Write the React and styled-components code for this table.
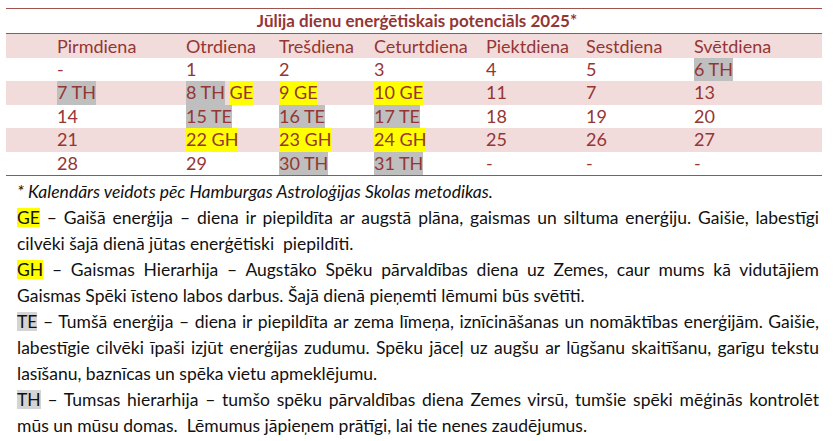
import React from "react";
import styled, { createGlobalStyle } from "styled-components";

const GlobalStyle = createGlobalStyle`
  html, body {
    margin: 0;
    padding: 0;
    background: #ffffff;
  }
  body {
    font-family: Lato, "Open Sans", "Noto Sans", sans-serif;
  }
`;

const days = ["Pirmdiena", "Otrdiena", "Trešdiena", "Ceturtdiena", "Piektdiena", "Sestdiena", "Svētdiena"];

// each cell: plain string, or a list of [text, kind] marks
const weeks = [
  { pink: false, cells: ["-", "1", "2", "3", "4", "5", [["6 TH", "th"]]] },
  { pink: true, cells: [[["7 TH", "th"]], [["8 TH", "th"], ["GE", "ge"]], [["9 GE", "ge"]], [["10 GE", "ge"]], "11", "7", "13"] },
  { pink: false, cells: ["14", [["15 TE", "th"]], [["16 TE", "th"]], [["17 TE", "th"]], "18", "19", "20"] },
  { pink: true, cells: ["21", [["22 GH", "ge"]], [["23 GH", "ge"]], [["24 GH", "ge"]], "25", "26", "27"] },
  { pink: false, cells: ["28", "29", [["30 TH", "th"]], [["31 TH", "th"]], "-", "-", "-"] },
];

const legend = [
  {
    tag: "GE",
    kind: "ge",
    lines: [
      " – Gaišā enerģija – diena ir piepildīta ar augstā plāna, gaismas un siltuma enerģiju. Gaišie, labestīgi",
      "cilvēki šajā dienā jūtas enerģētiski  piepildīti.",
    ],
  },
  {
    tag: "GH",
    kind: "ge",
    lines: [
      " – Gaismas Hierarhija – Augstāko Spēku pārvaldības diena uz Zemes, caur mums kā vidutājiem",
      "Gaismas Spēki īsteno labos darbus. Šajā dienā pieņemti lēmumi būs svētīti.",
    ],
  },
  {
    tag: "TE",
    kind: "te",
    lines: [
      " – Tumšā enerģija – diena ir piepildīta ar zema līmeņa, iznīcināšanas un nomāktības enerģijām. Gaišie,",
      "labestīgie cilvēki īpaši izjūt enerģijas zudumu. Spēku jāceļ uz augšu ar lūgšanu skaitīšanu, garīgu tekstu",
      "lasīšanu, baznīcas un spēka vietu apmeklējumu.",
    ],
  },
  {
    tag: "TH",
    kind: "te",
    lines: [
      " – Tumsas hierarhija – tumšo spēku pārvaldības diena Zemes virsū, tumšie spēki mēģinās kontrolēt",
      "mūs un mūsu domas.  Lēmumus jāpieņem prātīgi, lai tie nenes zaudējumus.",
    ],
  },
];

const markColors = {
  th: "#bfbfbf",
  ge: "#ffff00",
  te: "#d4d4d4",
};

const App = () => {
  return (
    <Page>
      <GlobalStyle />
      <Table>
        <TitleRow>Jūlija dienu enerģētiskais potenciāls 2025*</TitleRow>
        <Row $pink>
          {days.map((d) => (
            <Cell key={d}>{d}</Cell>
          ))}
        </Row>
        {weeks.map((w, i) => (
          <Row key={i} $pink={w.pink}>
            {w.cells.map((c, j) => (
              <Cell key={j}>
                {typeof c === "string"
                  ? c
                  : c.map(([text, kind], k) => (
                      <React.Fragment key={k}>
                        {k > 0 ? " " : null}
                        <CellMark $kind={kind}>{text}</CellMark>
                      </React.Fragment>
                    ))}
              </Cell>
            ))}
          </Row>
        ))}
      </Table>
      <Notes>
        <Footnote>* Kalendārs veidots pēc Hamburgas Astroloģijas Skolas metodikas.</Footnote>
        {legend.map((p) => (
          <Para key={p.tag}>
            {p.lines.map((line, i) => (
              <Line key={i} $last={i === p.lines.length - 1}>
                {i === 0 ? <Tag $kind={p.kind}>{p.tag}</Tag> : null}
                {line}
              </Line>
            ))}
          </Para>
        ))}
      </Notes>
    </Page>
  );
};

const Page = styled.div`
  width: 833px;
  height: 441px;
  box-sizing: border-box;
  padding: 8px 11px 0 6px;
  overflow: hidden;
`;

const Table = styled.div`
  display: flex;
  flex-direction: column;
  border-top: 1.5px solid #a0524f;
  border-bottom: 1.5px solid #a0524f;
  color: #943634;
  font-size: 18px;
`;

const TitleRow = styled.div`
  height: 24px;
  line-height: 24px;
  text-align: center;
  font-size: 17px;
  font-weight: bold;
  border-bottom: 1.5px solid #a0524f;
  padding-left: 6px;
`;

const Row = styled.div`
  display: grid;
  grid-template-columns: 129px 93px 95px 112px 100px 108px 1fr;
  height: 23.4px;
  line-height: 23.4px;
  padding-left: 51px;
  background: ${(p) => (p.$pink ? "#f2dbdb" : "transparent")};
  &:nth-child(2) {
    height: 24px;
    line-height: 24px;
  }
`;

const Cell = styled.div`
  white-space: nowrap;
  height: 100%;
`;

const CellMark = styled.span`
  display: inline-block;
  height: 100%;
  background: ${(p) => markColors[p.$kind]};
`;

const Notes = styled.div`
  margin-top: 3px;
  padding-left: 11px;
  width: 802px;
  color: #111111;
  font-size: 17.5px;
  line-height: 26px;
`;

const Footnote = styled.div`
  font-style: italic;
`;

const Para = styled.div``;

const Line = styled.div`
  text-align: ${(p) => (p.$last ? "left" : "justify")};
  text-align-last: ${(p) => (p.$last ? "left" : "justify")};
  white-space: ${(p) => (p.$last ? "pre" : "normal")};
`;

const Tag = styled.span`
  background: ${(p) => markColors[p.$kind]};
  line-height: 19px;
  display: inline-block;
`;

export default App;
